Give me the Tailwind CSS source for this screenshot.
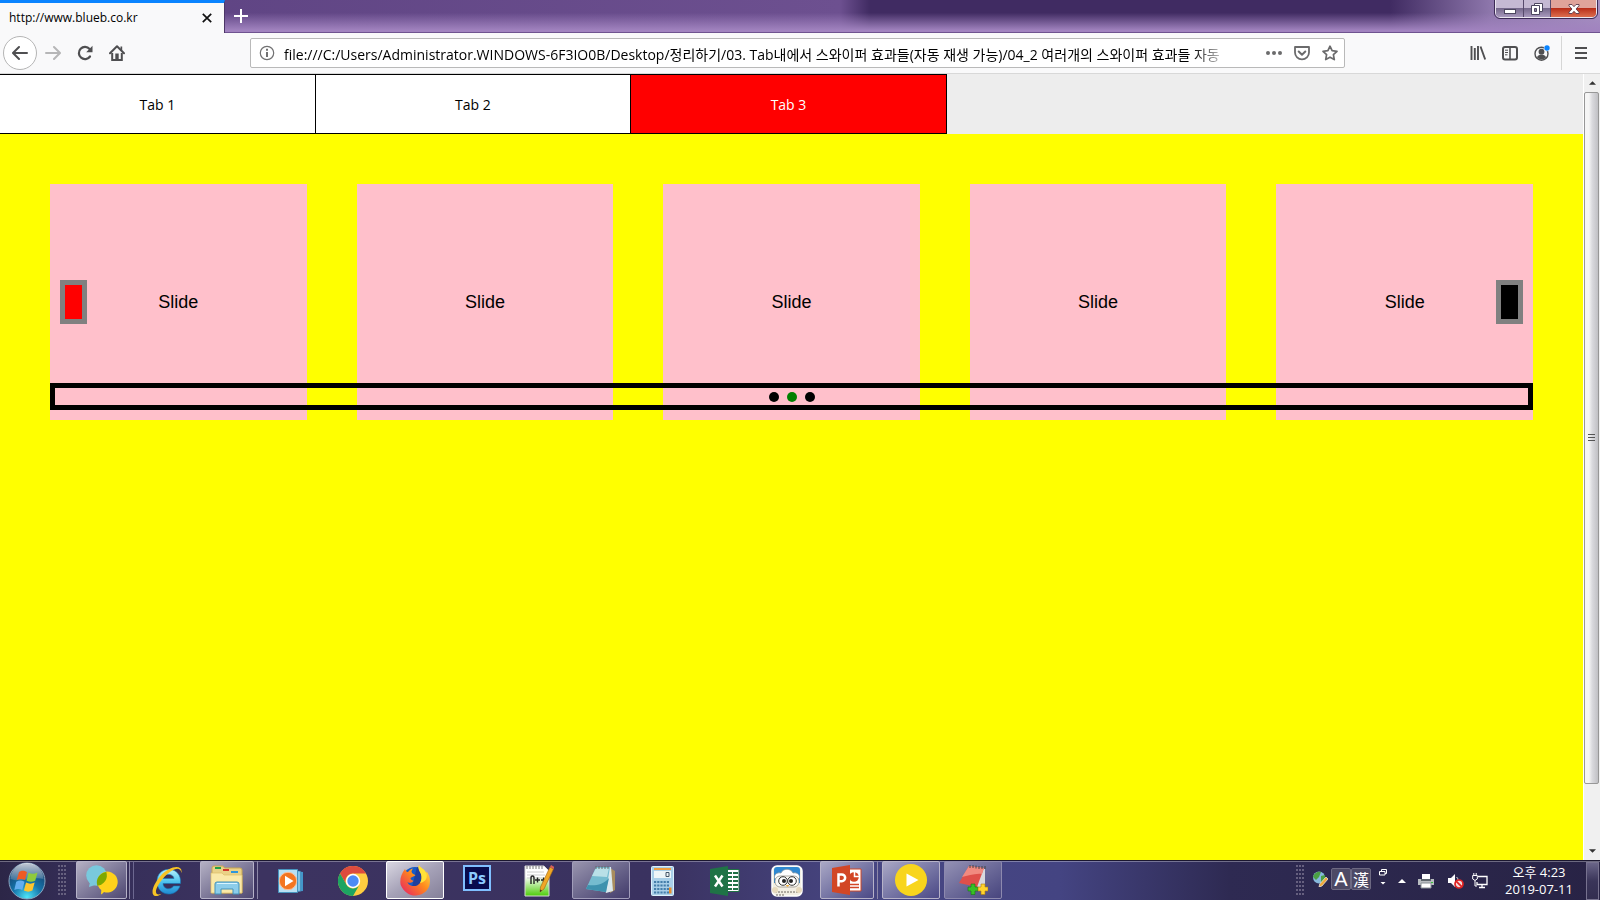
<!DOCTYPE html>
<html lang="ko">
<head>
<meta charset="utf-8">
<title>http://www.blueb.co.kr</title>
<script src="https://cdn.jsdelivr.net/npm/@tailwindcss/browser@4"></script>
</head>
<body class="h-screen flex flex-col overflow-hidden bg-[#ededed] text-black font-['Open_Sans','Noto_Sans_CJK_KR',sans-serif]">

<!-- Window title bar -->
<header class="h-[33px] shrink-0 flex items-stretch border-b border-[#6f5390] bg-[linear-gradient(to_bottom,transparent_40%,#a183bf_95%),linear-gradient(to_right,#5b4180_0,#6d5090_840px,#402b62_870px,#402b62_1390px,#8d76ab_1490px,#a48fc0_100%)]">
  <div class="w-[225px] h-[33px] shrink-0 flex items-center justify-between bg-[#f9f9fa] border-t-3 border-t-[#0a84ff] border-r border-r-[#4b3566] pl-[9px] pr-3">
    <span class="text-xs leading-4">http://www.blueb.co.kr</span>
    <button aria-label="Close tab" class="size-[10px]"><svg class="size-[10px] block" viewBox="0 0 10 10" stroke="#111" stroke-width="1.700"><path d="M.8.8l8.400 8.400M9.200.8L.8 9.200"/></svg></button>
  </div>
  <button aria-label="New tab" class="w-8 flex items-center justify-center"><svg class="size-[14px]" viewBox="0 0 14 14" stroke="#fff" stroke-width="2"><path d="M7 0v14M0 7h14"/></svg></button>
  <div class="ml-auto mr-[3px] flex w-[102px] h-[18px] border border-t-0 border-white/80 rounded-b-[5px] overflow-hidden outline outline-[#3c2a55]">
    <button aria-label="Minimize" class="w-7 flex items-center justify-center border-r border-[#574a6c] bg-linear-to-b from-[#c5b9d3] from-45% via-[#76698c] via-50% to-[#a899bd]"><svg class="w-3 h-[15px]" viewBox="0 0 12 15"><rect x=".5" y="8.500" width="11" height="4" fill="#fff" stroke="#4d4760"/></svg></button>
    <button aria-label="Restore" class="w-[27px] flex items-center justify-center border-r border-[#574a6c] bg-linear-to-b from-[#c5b9d3] from-45% via-[#76698c] via-50% to-[#a899bd]"><svg class="w-3 h-3" viewBox="0 0 12 12"><path d="M3.500.5h8v8h-8z" fill="#fff" stroke="#4d4760"/><path d="M.5 2.500h8v9h-8z" fill="#fff" stroke="#4d4760"/><path d="M3.500 5.500h2v3h-2z" fill="#8d80a0" stroke="#4d4760"/></svg></button>
    <button aria-label="Close window" class="flex-1 flex items-center justify-center bg-linear-to-b from-[#e0a39a] from-45% via-[#b92d19] via-50% to-[#dc6d4e]"><svg class="w-3 h-[10px]" viewBox="0 0 12 10"><path d="M1 .5h3l2 2.200L8 .5h3v1.300L8 5l3 3.200v1.300H8L6 7.300 4 9.500H1V8.200L4 5 1 1.800z" fill="#fff" stroke="#5b3a4b" stroke-width=".9"/></svg></button>
  </div>
</header>

<!-- Navigation toolbar -->
<nav aria-label="Browser" class="h-[41px] shrink-0 flex items-center bg-[#f9f9fa] border-b border-[#d8d8d8] pl-[3px] text-[#4f4f51]">
  <button aria-label="Back" class="size-[34px] rounded-full border border-[#b5b5b5] bg-white flex items-center justify-center"><svg class="size-4" viewBox="0 0 16 16" fill="none" stroke="currentColor" stroke-width="2" stroke-linecap="round" stroke-linejoin="round"><path d="M15 8H1.500M7 2L1 8l6 6"/></svg></button>
  <button aria-label="Forward" class="w-8 flex items-center justify-center text-[#b6b6b7]"><svg class="size-4" viewBox="0 0 16 16" fill="none" stroke="currentColor" stroke-width="2" stroke-linecap="round" stroke-linejoin="round"><path d="M1 8h13.500M9 2l6 6-6 6"/></svg></button>
  <button aria-label="Reload" class="w-8 flex items-center justify-center"><svg class="size-4" viewBox="0 0 16 16"><path d="M13 11.500A6.100 6.100 0 1 1 12.600 4" fill="none" stroke="currentColor" stroke-width="2.200" stroke-linecap="round"/><path d="M15.500.8v6.400H9.200z" fill="currentColor"/></svg></button>
  <button aria-label="Home" class="w-8 flex items-center justify-center"><svg class="size-4" viewBox="0 0 16 16"><path d="M1 8.300L8 1.300l7 7" fill="none" stroke="currentColor" stroke-width="2" stroke-linecap="round" stroke-linejoin="round"/><path d="M3.200 8v7h9.600V8" fill="none" stroke="currentColor" stroke-width="2"/><path d="M6.300 15V8.500h3.400V15z" fill="currentColor"/><path d="M11.500 1.500h1.700v4h-1.700z" fill="currentColor"/></svg></button>

  <div class="ml-[117px] mr-[117px] flex-1 min-w-0 h-[30px] flex items-center border border-[#b9b9b9] rounded-xs bg-white pl-2">
    <svg class="size-4 shrink-0" viewBox="0 0 16 16" fill="none" stroke="#717172"><circle cx="8" cy="8" r="6.700" stroke-width="1.200"/><path d="M8 7v5" stroke-width="2"/><path d="M8 3.800v2" stroke-width="2"/></svg>
    <input aria-label="Address" class="flex-1 min-w-0 ml-[9px] pt-px h-7 text-sm text-black outline-none bg-transparent [mask-image:linear-gradient(to_right,#000_96%,transparent)]" value="file:///C:/Users/Administrator.WINDOWS-6F3IO0B/Desktop/정리하기/03. Tab내에서 스와이퍼 효과들(자동 재생 가능)/04_2 여러개의 스와이퍼 효과들 자동">
    <div class="flex gap-3 ml-9 mr-[6px]">
      <button aria-label="Page actions"><svg class="size-4 block" viewBox="0 0 16 16" fill="#6b6b6c"><circle cx="2" cy="8" r="2"/><circle cx="8" cy="8" r="2"/><circle cx="14" cy="8" r="2"/></svg></button>
      <button aria-label="Save to Pocket"><svg class="size-4 block" viewBox="0 0 16 16" fill="none" stroke="#6b6b6c" stroke-width="1.800" stroke-linecap="round" stroke-linejoin="round"><path d="M1 2h14v5.500a7 6.800 0 0 1-14 0z"/><path d="M4.700 6.500L8 9.700l3.300-3.200" stroke-width="2"/></svg></button>
      <button aria-label="Bookmark"><svg class="size-4 block" viewBox="0 0 16 16" fill="none" stroke="#6b6b6c" stroke-width="1.700" stroke-linejoin="round"><path d="M8 1.200l2.100 4.500 4.900.6-3.600 3.400.9 4.900L8 12.200l-4.300 2.400.9-4.900L1 6.300l4.900-.6z"/></svg></button>
    </div>
  </div>

  <div class="flex items-center">
    <button aria-label="Library" class="w-8 flex items-center justify-center"><svg class="size-4" viewBox="0 0 16 16" stroke="currentColor" stroke-width="1.900"><path d="M1.500 1v14M4.800 3v12M8 1v14M10.500 1.500l4.700 13"/></svg></button>
    <button aria-label="Sidebars" class="w-8 flex items-center justify-center"><svg class="size-4" viewBox="0 0 16 16" fill="none" stroke="currentColor"><rect x="1" y="2" width="14" height="12.500" rx="2" stroke-width="2"/><path d="M8 2v12" stroke-width="1.600"/><path d="M3 5.200h3M3 7.500h3M3 9.800h2.500"/></svg></button>
    <button aria-label="Account" class="w-8 flex items-center justify-center"><svg class="size-4" viewBox="0 0 16 16"><circle cx="7.500" cy="8.700" r="6.500" fill="none" stroke="currentColor" stroke-width="1.400"/><circle cx="7.500" cy="6.700" r="2.900" fill="currentColor"/><path d="M3 12.300c1.500-3.600 7.500-3.600 9 0-1.500 2.700-7 3-9 0z" fill="currentColor"/><circle cx="13" cy="3" r="3.200" fill="#f9f9fa"/><circle cx="13" cy="3" r="2.700" fill="#0a84ff"/></svg></button>
    <span class="w-px h-[34px] bg-[#d6d6d6] ml-[3px]"></span>
    <button aria-label="Menu" class="w-[38px] flex items-center justify-center"><svg class="w-3 h-4" viewBox="0 0 12 16" stroke="currentColor" stroke-width="2"><path d="M0 3h12M0 8h12M0 13h12"/></svg></button>
  </div>
</nav>

<!-- Page -->
<div class="flex-1 min-h-0 flex">
  <main class="flex-1 min-w-0 flex flex-col">
    <div role="tablist" class="h-[60px] shrink-0 flex text-sm">
      <button role="tab" class="w-1/5 border border-black bg-white -mx-px pt-[2px]">Tab 1</button>
      <button role="tab" class="w-1/5 border border-black bg-white -mr-px pt-[2px]">Tab 2</button>
      <button role="tab" aria-selected="true" class="w-1/5 border border-black bg-[#f00] text-white pt-[2px]">Tab 3</button>
    </div>
    <section class="flex-1 bg-[#ff0] p-[50px]">
      <div class="relative font-['Liberation_Sans',sans-serif] text-lg">
        <div class="grid grid-cols-5 gap-[50px]">
          <div class="h-[236px] bg-[#ffc0cb] flex items-center justify-center">Slide</div>
          <div class="h-[236px] bg-[#ffc0cb] flex items-center justify-center">Slide</div>
          <div class="h-[236px] bg-[#ffc0cb] flex items-center justify-center">Slide</div>
          <div class="h-[236px] bg-[#ffc0cb] flex items-center justify-center">Slide</div>
          <div class="h-[236px] bg-[#ffc0cb] flex items-center justify-center">Slide</div>
        </div>
        <button aria-label="Previous slide" class="absolute left-[10px] top-24 w-[27px] h-11 border-5 border-[#808080] bg-[#f00]"></button>
        <button aria-label="Next slide" class="absolute right-[10px] top-24 w-[27px] h-11 border-5 border-[#808080] bg-black"></button>
        <div class="absolute inset-x-0 bottom-[10px] h-[27px] border-5 border-black flex items-center justify-center gap-2">
          <button aria-label="Page 1" class="size-[10px] rounded-full bg-black"></button>
          <button aria-label="Page 2" class="size-[10px] rounded-full bg-[#008000]"></button>
          <button aria-label="Page 3" class="size-[10px] rounded-full bg-black"></button>
        </div>
      </div>
    </section>
  </main>

  <!-- Scrollbar -->
  <div class="w-[17px] shrink-0 flex flex-col bg-[#f0f0f0] border-l border-white">
    <div class="h-[18px] flex items-center justify-center"><svg class="w-[7px] h-1" viewBox="0 0 8 4"><path d="M4 0l4 4H0z" fill="#333"/></svg></div>
    <div class="h-[692px] mr-px flex items-center justify-center rounded-xs border border-[#979797] bg-linear-to-r from-[#f5f5f5] from-30% via-[#dadade] via-55% to-[#c0c0c4]">
      <svg class="w-[7px] h-2" viewBox="0 0 7 8" stroke="#555"><path d="M0 .5h7M0 3.500h7M0 6.500h7"/></svg>
    </div>
    <div class="mt-auto h-[18px] flex items-center justify-center"><svg class="w-[7px] h-1" viewBox="0 0 8 4"><path d="M0 0h8L4 4z" fill="#333"/></svg></div>
  </div>
</div>

<!-- Taskbar -->
<footer class="h-10 shrink-0 flex items-stretch border-t border-[#1b1730] bg-[linear-gradient(to_bottom,#ffffff50_0,#ffffff50_1px,transparent_1px),linear-gradient(to_right,#2c2647_0,#352e58_80px,#3c3360_260px,#3a3260_660px,#474682_860px,#444482_1060px,#2e2a52_1230px,#282345_100%)]">
  <button aria-label="Start" class="w-[54px] flex items-center justify-center">
    <svg class="size-[38px]" viewBox="0 0 38 38"><defs><radialGradient id="orb" cx=".5" cy=".95" r=".9"><stop offset="0" stop-color="#4fe6f8"/><stop offset=".45" stop-color="#1575ab"/><stop offset="1" stop-color="#173763"/></radialGradient><linearGradient id="orbShine" x2="0" y2="1"><stop offset="0" stop-color="#fff" stop-opacity=".75"/><stop offset="1" stop-color="#fff" stop-opacity=".15"/></linearGradient></defs><circle cx="19" cy="19" r="18" fill="url(#orb)" stroke="#8aa6c0"/><path d="M2.500 17a16.500 16 0 0 1 33 0c-10-3-23 4-33 0z" fill="url(#orbShine)"/><path d="M11 10c3-2 5-1.500 8 0l-2 8c-3-1.500-5-1.500-8.300 0z" fill="#ee5a24"/><path d="M20.500 10.700c3 1.500 5.500 1.500 9-.2l-2.300 8.200c-3 1.500-6 1.300-8.600 0z" fill="#8fcb3d"/><path d="M8.200 19.700c3-1.600 5.500-1.500 8.300 0L14.300 28c-3-1.500-5-1.500-8 0z" fill="#63aef0"/><path d="M18 20.500c3 1.500 5.500 1.500 8.700 0l-2.300 8c-3 1.600-5.600 1.500-8.500 0z" fill="#fdc52d"/></svg>
  </button>
  <div class="w-5 flex items-center pl-1"><span class="w-2 h-8 bg-[radial-gradient(circle_at_1px_1px,#66607f_1px,transparent_1px)] bg-[size:3px_4px]"></span></div>

  <div class="flex">
    <button aria-label="Messenger" class="w-[62px] flex pl-[2px]">
      <span class="w-[51px] h-[38px] border border-[#b6b2c8] rounded-xs bg-linear-to-br from-[#b5b1c4] to-[#4f4872] flex items-center justify-center"><svg class="w-8 h-[30px]" viewBox="0 0 32 30"><circle cx="10.500" cy="10.500" r="10.300" fill="#79c9dd"/><path d="M4 17l-1 5 6-2z" fill="#79c9dd"/><path d="M21 6.500a10.500 10.500 0 1 1-3 20.500q-1.500 1.500-3 2.500l.3-4.500A10.500 10.500 0 0 1 21 6.500z" fill="#ffd21a"/><path d="M20.300 7a10.300 10.300 0 0 1-9 13.700A10.500 10.500 0 0 1 20.300 7z" fill="#7fa800"/></svg></span>
      <span class="w-[3px] h-[38px] border-r border-[#8d88a8]"></span><span class="w-1 h-[38px] border-r border-[#6d6890]"></span>
    </button>
    <button aria-label="Internet Explorer" class="w-[62px] flex items-center justify-center"><svg class="w-8 h-8" viewBox="0 0 32 32"><defs><linearGradient id="ie" x2="0" y2="1"><stop offset="0" stop-color="#b9f2fd"/><stop offset=".5" stop-color="#4fc3ee"/><stop offset="1" stop-color="#1f8ad2"/></linearGradient></defs><path d="M29.500 18.500H12c.3 6 8 7 10.500 2.500h6.500c-4 12-22.500 10.500-23-4C5.500 1 28 0 29.500 15zM12 13.500h11c-.8-5.500-10-5.500-11 0z" fill="url(#ie)" stroke="#1475b5" stroke-width=".6"/><path d="M30.500 8C32-1 19 .5 9.500 11 2 19.500-1 29.500 4 31c2 .5 4.500-.8 6.500-2.300-2.500 1-5 1.300-5.500-1.500-.6-3 3-9.500 8.500-15.500C19.500 5.500 29-.5 30.500 8z" fill="#f7c325"/></svg></button>
    <button aria-label="Explorer" class="w-[62px] flex pl-[2px]">
      <span class="w-[54px] h-[38px] border border-[#b6b2c8] rounded-xs bg-linear-to-br from-[#b5b1c4] to-[#4f4872] flex items-center justify-center"><svg class="w-[34px] h-[30px]" viewBox="0 0 34 30"><path d="M2 3q0-2 2-2h9l1.500 2H30q2 0 2 2v23H2z" fill="#ead287" stroke="#c8a651"/><path d="M5 2h6v2H5z" fill="#22a045"/><path d="M13 4h6v2h-6z" fill="#d2372c"/><path d="M21 6h7v2h-7z" fill="#2e96dc"/><path d="M1 8h11l2 2h18v18H1z" fill="#fae9a9" stroke="#dcbf69" stroke-width=".7"/><path d="M5 29V19q0-2 2-2h20q2 0 2 2v10h-6v-5H11v5z" fill="#8ccdea" stroke="#4391ba"/><path d="M7 18.500h20" stroke="#d9f5ff"/></svg></span>
      <span class="w-1 h-[38px] border-r border-[#8d88a8]"></span>
    </button>
    <button aria-label="Media Player" class="w-[62px] flex items-center justify-center"><svg class="w-[26px] h-6" viewBox="0 0 26 24"><path d="M6 1l19 2v19L6 24z" fill="#4396c9"/><path d="M4 .7l18.500 1.500v20L4 23.500z" fill="#84c5e8" stroke="#357fad" stroke-width=".5"/><path d="M.5.5h19v23H.5z" fill="#b9e0f3" stroke="#4795bf"/><circle cx="10" cy="12" r="8.700" fill="#f37521" stroke="#fbc09a"/><path d="M7 6.700v10.600l8.500-5.300z" fill="#fff"/></svg></button>
    <button aria-label="Chrome" class="w-[62px] flex items-center justify-center"><svg class="w-[30px] h-[30px]" viewBox="0 0 30 30"><circle cx="15" cy="15" r="15" fill="#ffcd40"/><path d="M2 7.500A15 15 0 0 1 28 7.500H15a7.500 7.500 0 0 0-6.500 11.300z" fill="#dd4b3e"/><path d="M2 7.500A15 15 0 0 0 15 30l6.500-11.200a7.500 7.500 0 0 1-13 0z" fill="#1da462"/><circle cx="15" cy="15" r="7.200" fill="#fff"/><circle cx="15" cy="15" r="5.700" fill="#4c8bf5"/></svg></button>
    <button aria-label="Firefox" class="w-[62px] flex pl-[2px]">
      <span class="w-[58px] h-[38px] border border-white rounded-xs bg-linear-to-br from-[#d9d7e1] via-[#a5a1b7] to-[#858099] flex items-center justify-center"><svg class="w-[30px] h-8" viewBox="0 0 30 32"><defs><linearGradient id="fx" x1="1" y1="0" x2="0" y2="1"><stop offset="0" stop-color="#fff14d"/><stop offset=".45" stop-color="#ff8a1c"/><stop offset="1" stop-color="#e5186b"/></linearGradient></defs><circle cx="15" cy="16" r="13" fill="#175bc6"/><path d="M17 3a13 13 0 0 1 9 13l-5 8-9-1z" fill="#213f9b"/><path d="M19 1c-1.500 4 1 6 2 9 2 6-1 12-7 12-4 0-6-2-6.500-4 2 1.500 4.500 1 6-1.300-1-.2-3-.7-3-2.700 1.500-1.500 4-1.200 5-3-2-1-3.500-1-4-3.500.3-1.500 1-2.500 1.500-3-2.500.5-4 2-5 3.500-1 0-2-.5-3-3-4 5-5.500 11-4.300 16C4 29 11 32 16 31.500 25 31 31 24 29.800 15c-.4-3-1.500-5.500-3.300-7.500-.2 1-.3 1.500-.5 2C25 5 20 4 19 1z" fill="url(#fx)"/><path d="M19 1c-1.500 4 1 6 2 9 1 3 .6 6.500-1 9 6-1 8-6 6.200-10C25 5 20 4 19 1z" fill="#ffe338"/></svg></span>
    </button>
    <button aria-label="Photoshop" class="w-[62px] flex justify-center pt-1"><span class="w-[28px] h-[26px] border-2 border-[#80bfff] bg-[#080b4c] text-[#8ccaff] text-base leading-[22px] font-bold">Ps</span></button>
    <button aria-label="Notepad++" class="w-[62px] flex items-center justify-center"><svg class="w-[30px] h-8" viewBox="0 0 30 32"><defs><linearGradient id="npp" x2="0" y2="1"><stop offset=".35" stop-color="#fff"/><stop offset="1" stop-color="#4ccc08"/></linearGradient></defs><path d="M1 1h19l5 5v25H1z" fill="url(#npp)" stroke="#d7d7d7"/><path d="M3 1v3M6 1v3M9 1v3M12 1v3M15 1v3M18 1v3" stroke="#777"/><path d="M3 7h17M3 10h18M3 13h15" stroke="#ccc"/><path d="M7 19v-6q0-2 1.500-2t1.500 2v6M11 15h5M13.500 12.500v5M17 15h5M19.500 12.500v5" fill="none" stroke="#222" stroke-width="1.400"/><path d="M26 2l3.500 2L20 24l-4 3 .5-5z" fill="#f0a726" stroke="#9d6412" stroke-width=".6"/><path d="M26 2l1-2 3.500 2-1 2z" fill="#d6605a"/><path d="M16 27l.4-2.500 1.500 1z" fill="#222"/></svg></button>
    <button aria-label="Notepad" class="w-[62px] flex pl-[2px]">
      <span class="w-[58px] h-[38px] border border-[#a19dba] rounded-xs bg-linear-to-br from-[#9995ae] to-[#433c6b] flex items-center justify-center"><svg class="w-8 h-[30px]" viewBox="0 0 32 30"><path d="M25 3l5 3v19l-5 3z" fill="#a98d5e"/><path d="M12 2h14l2 24-7 2z" fill="#dce9ed"/><path d="M11 2h14l-4 25L1 24z" fill="#75bccf"/><path d="M11 3h13l-2 9-15-1z" fill="#b9e0e7"/><path d="M1 24l20 3 3-14C18 20 10 21 3 20z" fill="#3e92ae"/><path d="M11 1v3M14 1v3M17 1v3M20 1v3M23 1v3" stroke="#63696b"/></svg></span>
    </button>
    <button aria-label="Calculator" class="w-[62px] flex items-center justify-center"><svg class="w-[24px] h-[30px]" viewBox="0 0 24 30"><rect x=".5" y=".5" width="22" height="29" rx="1" fill="#a9cfe8" stroke="#dcf0fb"/><path d="M3 2h17v2H3z" fill="#ee9e3f"/><path d="M3 5h17v7H3z" fill="#edf5f7"/><path d="M15 6.500h3v4h-3z" fill="none" stroke="#456"/><path d="M3 16h15M3 19.500h15M3 23h15M3 26.500h15" stroke="#457eaa" stroke-width="2" stroke-dasharray="2.200 1"/><path d="M18 21.500h2.500v6H18z" fill="#e98e2c"/></svg></button>
    <button aria-label="Excel" class="w-[62px] flex items-center justify-center"><svg class="w-[30px] h-[30px]" viewBox="0 0 30 30"><path d="M17 3.500h12v22H17z" fill="#fff" stroke="#207245"/><path d="M18 6h4v2h-4zM23 6h5v2h-5zM18 10h4v2h-4zM23 10h5v2h-5zM18 14h4v2h-4zM23 14h5v2h-5zM18 18h4v2h-4zM23 18h5v2h-5zM18 22h4v2h-4zM23 22h5v2h-5z" fill="#207245"/><path d="M0 3l18-3v30L0 27z" fill="#1f7346"/><path d="M5 9.500l7.500 11M12.500 9.500L5 20.500" stroke="#fff" stroke-width="2.500"/></svg></button>
    <button aria-label="GOM" class="w-[62px] flex items-center justify-center"><svg class="w-8 h-8" viewBox="0 0 32 32"><rect x="1" y="1" width="30" height="30" rx="5" fill="#f3efe3" stroke="#fff" stroke-width="1.500"/><path d="M3 5q0-3 3-3h20q3 0 3 3v13H3z" fill="#2f88d1"/><path d="M4 14c-2-4 2-7 6-6 2-5 10-5 12 0 4-1 8 2 6 6z" fill="#fff" stroke="#77899a" stroke-width=".7"/><rect x="4" y="11" width="24" height="11" rx="5" fill="#faf9f4" stroke="#8a857c" stroke-width=".7"/><circle cx="12" cy="16" r="4.300" fill="#fff" stroke="#333"/><circle cx="21" cy="16" r="4.300" fill="#fff" stroke="#333"/><circle cx="13" cy="16" r="2" fill="#222"/><circle cx="20" cy="16" r="2" fill="#222"/><path d="M14.500 20h4l-2 2z" fill="#edab3d"/><path d="M4 27h24M5 30h8" stroke="#6c675e" stroke-dasharray="2 1"/><circle cx="4" cy="25" r="3" fill="#e8dabd"/><circle cx="28" cy="25" r="3" fill="#e8dabd"/></svg></button>
    <button aria-label="PowerPoint" class="w-[62px] flex pl-[2px]">
      <span class="w-[54px] h-[38px] border border-[#b6b2c8] rounded-xs bg-linear-to-br from-[#aaa8c5] to-[#4c4986] flex items-center justify-center"><svg class="w-[30px] h-[30px]" viewBox="0 0 30 30"><path d="M16 4h13v22H16z" fill="#fff" stroke="#d24625"/><circle cx="22" cy="12" r="4.800" fill="#d24625"/><path d="M22.500 6v5.500h5.500" fill="none" stroke="#fff" stroke-width="1.500"/><path d="M18 19.500h9M18 22.500h9" stroke="#d24625" stroke-width="1.500"/><path d="M0 3l18-3v30L0 27z" fill="#d24625"/><path d="M6.500 21.500V9.500h3.300a3.300 3.300 0 0 1 0 6.700H6.500" fill="none" stroke="#fff" stroke-width="2.500"/></svg></span>
      <span class="w-1 h-[38px] border-r border-[#8d88a8]"></span>
    </button>
    <button aria-label="Player" class="w-[62px] flex pl-[2px]">
      <span class="w-[58px] h-[38px] border border-[#b6b2c8] rounded-xs bg-linear-to-br from-[#aaa8c5] to-[#4c4986] flex items-center justify-center"><svg class="size-8" viewBox="0 0 32 32"><circle cx="16" cy="16" r="16" fill="#f8d51c"/><path d="M11.500 9.500v13L23.500 16z" fill="#fff"/></svg></span>
    </button>
    <button aria-label="Notes" class="w-[62px] flex pl-[2px]">
      <span class="w-[58px] h-[38px] border border-[#8d89ae] rounded-xs bg-linear-to-br from-[#9491b4] to-[#48457e] flex items-center justify-center"><svg class="w-[30px] h-8" viewBox="0 0 30 32"><path d="M14 3l13 2v18l-7 3z" fill="#d9d9de"/><path d="M11 2l15 2-7 19-18-4z" fill="#df4f4a"/><path d="M11 2l15 2-2 6C17 9 10 12 4 13z" fill="#f18a80"/><path d="M12 1v3M15 1v3M18 1.500v3M21 2v3M24 2v3M27 2v3" stroke="#444"/><path d="M13 20h4v3h3v4h-3v3.500h-4V27h-3v-4h3z" fill="#38bf26" stroke="#167b10" stroke-width=".6"/><path d="M23 20h4v3h3v4h-3v3.500h-4V27h-3v-4h3z" fill="#ffd32e" stroke="#ad7d0d" stroke-width=".6"/></svg></span>
    </button>
  </div>

  <!-- Notification area -->
  <div class="ml-auto flex items-center text-white">
    <span class="w-2 h-8 mr-2 bg-[radial-gradient(circle_at_1px_1px,#66607f_1px,transparent_1px)] bg-[size:3px_4px]"></span>
    <svg class="w-4 h-4 mr-[3px] mb-1" viewBox="0 0 16 16"><circle cx="7" cy="6.500" r="6" fill="#86b8dc"/><path d="M1 6C2 1 7 0 9 1L7 6l-3 3zM9 5l4-1c.5 4-1 6-4 8z" fill="#4ba044"/><path d="M14 6l2 2-6 7-3 1 .7-3z" fill="#f0a83a" stroke="#eee" stroke-width=".7"/></svg>
    <button class="w-5 h-[22px] mb-[3px] border border-[#6d6982] rounded-xs bg-[#4d4965] text-xl leading-5 font-['Liberation_Sans','Noto_Sans_CJK_KR',sans-serif]">A</button>
    <button class="w-5 h-[22px] mb-[3px] border border-[#6d6982] rounded-xs bg-[#4d4965] text-base leading-5 font-['Noto_Sans_CJK_KR',sans-serif]">漢</button>
    <svg class="w-2 h-4 ml-2 mb-2 overflow-visible" viewBox="0 0 8 16" fill="none" stroke="#fff"><path d="M2.500 2V.5h5v4H6M.5 2.500H6v3.500H.5z"/><path d="M1.500 13h5L4 15.500z" fill="#fff" stroke="none"/></svg>
    <svg class="w-2 h-1 ml-[11px]" viewBox="0 0 8 4" fill="#fff"><path d="M4 0l4 4H0z"/></svg>
    <svg class="w-4 h-4 ml-[12px]" viewBox="0 0 16 16"><path d="M4 1h8v6H4z" fill="#fff"/><path d="M0 6h16v6H0z" fill="#b8bcc0"/><path d="M3 6h10v2H3z" fill="#5c646b"/><path d="M3 10h10v5H3z" fill="#fff" stroke="#8a9197"/><path d="M13 9h2v1h-2z" fill="#38c638"/></svg>
    <svg class="w-4 h-4 ml-[14px]" viewBox="0 0 16 16"><path d="M0 5h3l4-4v13l-4-4H0z" fill="#fff"/><path d="M8.500 4q1.500 1 1.500 3" fill="none" stroke="#ddd"/><circle cx="11" cy="11" r="4" fill="#f4dada" stroke="#e02222" stroke-width="1.700"/><path d="M8.300 8.300l5.400 5.400" stroke="#e02222" stroke-width="1.700"/></svg>
    <svg class="w-4 h-4 ml-2" viewBox="0 0 16 16" fill="none" stroke="#fff"><path d="M6 3.500h9v8H5V9" stroke-width="1.300"/><path d="M7 14.500h6M10 11.500v3" stroke-width="1.300"/><path d="M.7 2.500h4.600V6L3 7.500.7 6zM1.800 0v2.500M4.200 0v2.500M3 7.500V13h2"/></svg>
    <div class="w-[98px] pl-1 pt-px text-center text-[13px] leading-[17px]"><div>오후 4:23</div><div>2019-07-11</div></div>
    <button aria-label="Show desktop" class="w-[13px] h-[38px] mr-px border border-[#77728f] bg-linear-to-b from-[#6a6588] via-[#3a3559] to-[#332e50]"></button>
  </div>
</footer>
</body>
</html>
